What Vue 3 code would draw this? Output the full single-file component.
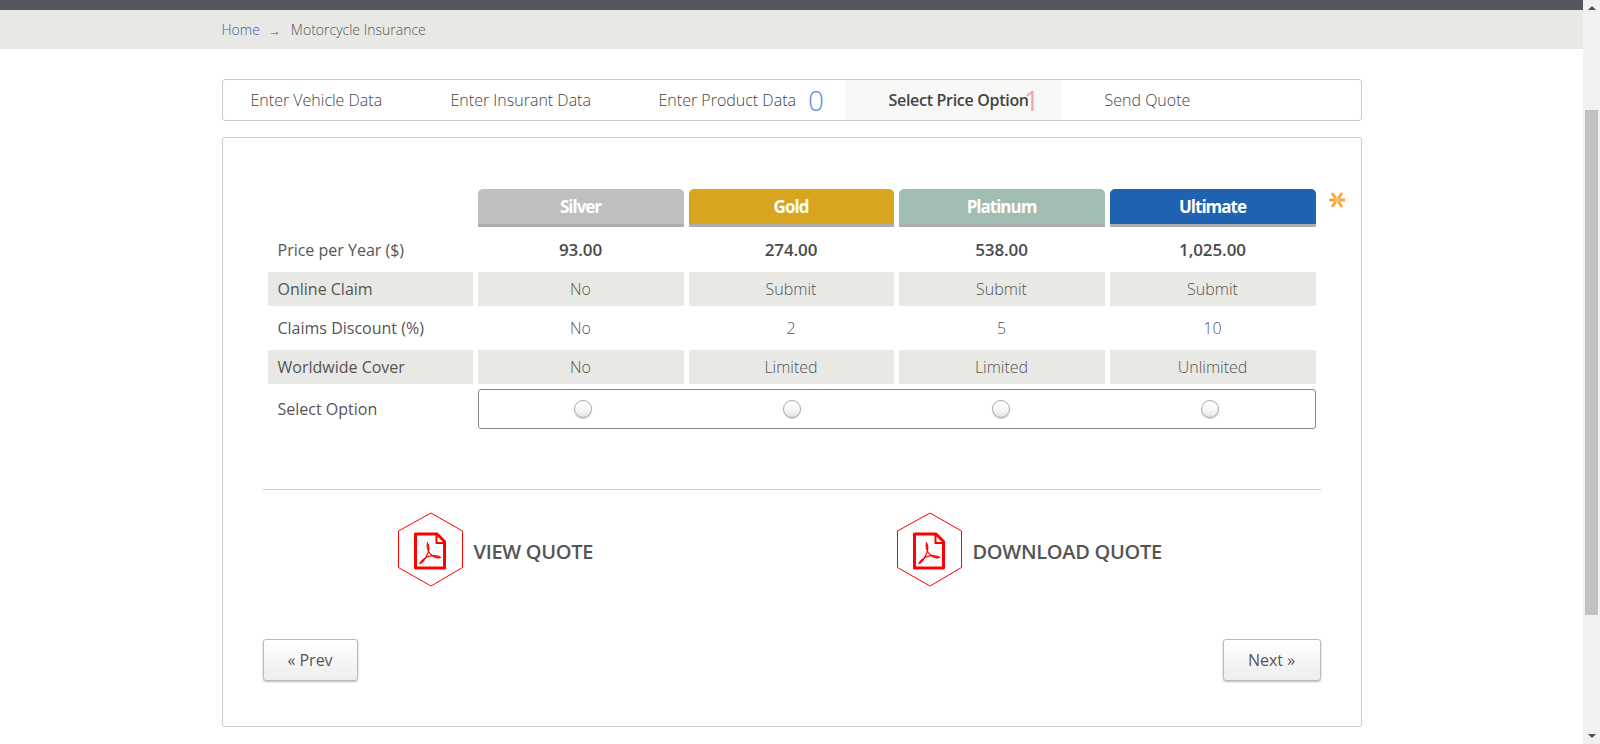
<script setup>
const steps = [
  { label: 'Enter Vehicle Data', cls: 'veh' },
  { label: 'Enter Insurant Data', cls: 'ins' },
  { label: 'Enter Product Data', cls: 'prod', badge: '0' },
  { label: 'Select Price Option', cls: 'sel active', badge: '1' },
  { label: 'Send Quote', cls: 'send' }
]
const plans = [
  { name: 'Silver', cls: 'silver' },
  { name: 'Gold', cls: 'gold' },
  { name: 'Platinum', cls: 'platinum' },
  { name: 'Ultimate', cls: 'ultimate' }
]
const rows = [
  { label: 'Price per Year ($)', cls: 'price', values: ['93.00', '274.00', '538.00', '1,025.00'] },
  { label: 'Online Claim', cls: 'shade', values: ['No', 'Submit', 'Submit', 'Submit'] },
  { label: 'Claims Discount (%)', cls: 'plain', values: ['No', '2', '5', '10'] },
  { label: 'Worldwide Cover', cls: 'shade', values: ['No', 'Limited', 'Limited', 'Unlimited'] }
]
const quotes = ['VIEW QUOTE', 'DOWNLOAD QUOTE']
</script>

<template>
  <div class="page">
    <main class="main">
      <div class="topbar"></div>
      <div class="crumbbar">
        <div class="container crumbs">
          <span class="home">Home</span>
          <span class="arrow">→</span>
          <span>Motorcycle Insurance</span>
        </div>
      </div>
      <div class="container">
        <nav class="steps">
          <div v-for="s in steps" :key="s.label" class="step" :class="s.cls">
            <span>{{ s.label }}</span>
            <span v-if="s.badge" class="badge">{{ s.badge }}</span>
          </div>
        </nav>
        <section class="panel">
          <div class="table">
            <div class="corner"></div>
            <div v-for="p in plans" :key="p.name" class="plan" :class="p.cls">{{ p.name }}</div>
            <template v-for="r in rows" :key="r.label">
              <div class="label" :class="r.cls">{{ r.label }}</div>
              <div v-for="(v, i) in r.values" :key="i" class="cell" :class="r.cls">{{ v }}</div>
            </template>
            <div class="label select-label">Select Option</div>
            <div class="radios">
              <span v-for="p in plans" :key="p.name" class="radio"></span>
            </div>
            <svg class="star" viewBox="0 0 16 16" width="16" height="16">
              <path d="M0 8H16M3 1L13 15M13 1L3 15" stroke="#f9a638" stroke-width="2.8" fill="none" />
              <circle cx="8" cy="8" r="2.5" fill="#fcc374" />
            </svg>
          </div>
          <hr class="rule" />
          <div class="quotes">
            <div v-for="q in quotes" :key="q" class="quote">
              <svg class="pdf" viewBox="0 0 68 76" width="68" height="76">
                <path d="M34 1L65.5 19V55.5L34 74L1.5 55.5V19Z" fill="none" stroke="#f00" stroke-width="1" />
                <path d="M18.5 22H40L47.5 29.5V56H18.5Z" fill="none" stroke="#f00" stroke-width="3" stroke-linejoin="round" />
                <path d="M39.5 22V31H47.5" fill="none" stroke="#f00" stroke-width="2" />
                <path d="M30.5 31C29.5 35 31 39.5 34 42.5C36.5 45 41 46.5 43.5 45.5C41 43 33 43 29 45.5C26 47.5 23.5 49.5 23 51.5C26 50.5 29 45.5 31 40.5C32 37.5 32 33.5 30.5 31Z" fill="none" stroke="#f00" stroke-width="1.2" />
              </svg>
              <span class="quote-text">{{ q }}</span>
            </div>
          </div>
          <div class="buttons">
            <button class="btn prev">« Prev</button>
            <button class="btn next">Next »</button>
          </div>
        </section>
      </div>
    </main>
    <aside class="scrollbar">
      <span class="tri up"></span>
      <div class="track"><div class="thumb"></div></div>
      <span class="tri down"></span>
    </aside>
  </div>
</template>

<style>
html, body { margin: 0; height: 100%; overflow: hidden; background: #fff; }
</style>

<style scoped>
.page {
  display: flex;
  height: 744px;
  font-family: "Open Sans", "Liberation Sans", sans-serif;
  color: #555;
}
.main { flex: 1; min-width: 0; overflow: hidden; }
.container { width: 1140px; margin: 0 auto; }
.topbar { height: 10px; background: #54575c; }
.crumbbar { height: 39px; background: #e8e8e4; }
.crumbs {
  display: flex;
  align-items: center;
  height: 39px;
  font-size: 14px;
  font-weight: 300;
  color: #555;
}
.home { color: #34609a; }
.arrow { margin: 2px 10px 0 9px; font-size: 12px; }
.steps {
  display: flex;
  height: 40px;
  margin-top: 30px;
  border: 1px solid #ccc;
  border-radius: 3px;
  font-size: 16px;
  font-weight: 300;
  color: #444;
}
.step { display: flex; align-items: center; height: 40px; white-space: nowrap; }
.veh { padding-left: 28px; width: 228px; box-sizing: border-box; }
.ins { width: 208px; box-sizing: border-box; }
.prod { width: 186px; box-sizing: border-box; }
.sel { width: 216px; padding-left: 44px; box-sizing: border-box; }
.send { padding-left: 44px; }
.active { background: #f8f8f7; font-weight: 600; color: #444; letter-spacing: -0.3px; }
.prod .badge { margin-left: 12px; font-size: 28px; color: #5b8fd0; }
.sel .badge { margin-left: -5px; font-size: 28px; font-weight: 400; color: #f0a8a8; }
.panel {
  margin-top: 16px;
  height: 590px;
  box-sizing: border-box;
  padding: 51px 40px 0;
  border: 1px solid #ccc;
  border-radius: 3px;
}
.table {
  position: relative;
  display: grid;
  grid-template-columns: 205px 206px 205px 206px 206px;
  grid-template-rows: 38px 35px 34px 34px 34px 40px;
  column-gap: 5px;
  row-gap: 5px;
  margin-left: 5px;
  width: 1048px;
  font-size: 16px;
}
.plan {
  box-sizing: border-box;
  display: flex;
  align-items: center;
  justify-content: center;
  border-radius: 5px 5px 0 0;
  border-bottom: 3px solid #aeaeae;
  color: #fff;
  font-weight: 700;
  font-size: 17px;
  letter-spacing: -1px;
}
.silver { background: #bfbfbf; }
.gold { background: #d9a41e; }
.platinum { background: #a1bdb1; }
.ultimate { background: #1e62b0; }
.label { display: flex; align-items: center; padding-left: 10px; color: #555; }
.cell { display: flex; align-items: center; justify-content: center; font-weight: 300; color: #555; }
.shade { background: #e8e8e4; }
.cell.price { font-weight: 600; color: #4a4a4a; font-size: 17px; letter-spacing: -0.1px; }
.radios {
  grid-column: 2 / 6;
  box-sizing: border-box;
  display: flex;
  align-items: center;
  gap: 191px;
  padding-left: 95px;
  border: 1px solid #888;
  border-radius: 3px;
}
.radio {
  width: 16px;
  height: 16px;
  border: 1px solid #aaa;
  border-radius: 50%;
  background: linear-gradient(#fff, #f6f6f6 60%, #e4e4e4);
  box-shadow: 0 1px 1px #ccc;
}
.star { position: absolute; left: 1061px; top: 3px; }
.rule { margin: 60px 0 0; border: 0; border-top: 1px solid #ccc; }
.quotes { display: flex; padding-left: 134px; margin-top: 22px; }
.quote { display: flex; align-items: center; gap: 9px; }
.quote:first-child { width: 499px; }
.quote-text { margin-top: 2px; font-size: 20px; font-weight: 600; color: #555; letter-spacing: -0.3px; }
.buttons { display: flex; justify-content: space-between; margin-top: 51px; }
.btn {
  height: 42px;
  border: 1px solid #bbb;
  border-radius: 3px;
  background: linear-gradient(#fff, #eee);
  box-shadow: 0 1px 2px #bbb;
  font: 400 16px "Open Sans", "Liberation Sans", sans-serif;
  color: #555;
  padding: 0;
}
.prev { width: 95px; }
.next { width: 98px; }
.scrollbar {
  width: 17px;
  flex: none;
  background: #f1f1f1;
  display: flex;
  flex-direction: column;
  align-items: center;
  position: relative;
}
.track { flex: 1; width: 100%; position: relative; }
.thumb { position: absolute; left: 2px; right: 2px; top: 96px; height: 505px; background: #c1c1c1; }
.tri { width: 0; height: 0; flex: none; border-left: 4px solid transparent; border-right: 4px solid transparent; }
.up { margin: 6px 0 4px; border-bottom: 4px solid #505050; }
.down { margin: 4px 0 6px; border-top: 4px solid #505050; }
</style>
